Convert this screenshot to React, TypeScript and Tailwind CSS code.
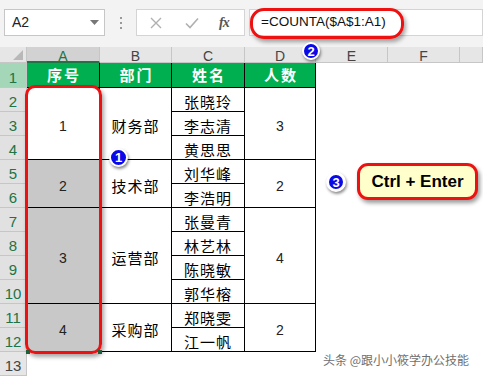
import React from "react";

const cjk = { fontFamily: '"Noto Sans CJK SC", "Noto Sans", sans-serif' };
const lat = { fontFamily: '"Liberation Sans", Arial, sans-serif' };

type Block = { rows: number; text: string; gray?: boolean };

const hClass: Record<number, string> = {
  1: "h-[24px]",
  2: "h-[48px]",
  3: "h-[72px]",
  4: "h-[96px]",
};

function ColHeader({ letter, w, selected }: { letter: string; w: string; selected?: boolean }) {
  return (
    <div
      className={
        "h-[16px] flex items-center justify-center text-[14px] leading-none border-r border-[#c6c6c6] " +
        w +
        (selected
          ? " bg-[#d2d2d2] text-[#217346] border-b-2 border-b-[#217346]"
          : " bg-[#e6e6e6] text-[#444] border-b border-b-[#c6c6c6]")
      }
      style={lat}
    >
      <span className="mt-[3px]">{letter}</span>
    </div>
  );
}

function HeadCell({ text }: { text: string }) {
  return (
    <div
      className="h-[25px] bg-[#00b050] text-white font-bold text-[15px] tracking-[2px] flex items-center justify-center border-r border-b border-black"
      style={cjk}
    >
      <span className="pl-[2px]">{text}</span>
    </div>
  );
}

function DataCol({
  letter,
  w,
  head,
  blocks,
  selected,
  numeric,
}: {
  letter: string;
  w: string;
  head: string;
  blocks: Block[];
  selected?: boolean;
  numeric?: boolean;
}) {
  return (
    <div className={"flex flex-col shrink-0 " + w}>
      <ColHeader letter={letter} w="w-full" selected={selected} />
      <HeadCell text={head} />
      {blocks.map((b, i) => (
        <div
          key={i}
          className={
            "flex items-center justify-center border-r border-b border-black pt-[5px] " +
            hClass[b.rows] +
            (b.gray ? " bg-[#c8c8c8]" : " bg-white") +
            (numeric ? " text-[14px] text-[#222]" : " text-[15px] text-black tracking-[1px]")
          }
          style={numeric ? lat : cjk}
        >
          {b.text}
        </div>
      ))}
    </div>
  );
}

function EmptyCol({ letter, w }: { letter: string; w: string }) {
  return (
    <div className={"flex flex-col shrink-0 " + w}>
      <ColHeader letter={letter} w="w-full" />
      <div className="flex-1 bg-white" />
    </div>
  );
}

function Badge({ n, cls }: { n: string; cls: string }) {
  return (
    <div
      className={
        "absolute rounded-full bg-[#0a0ae8] border-2 border-white shadow-[1px_2px_3px_rgba(0,0,0,0.45)] text-white font-bold text-[13px] leading-none flex items-center justify-center " +
        cls
      }
      style={lat}
    >
      {n}
    </div>
  );
}

export default function App() {
  const rowNums = Array.from({ length: 11 }, (_, i) => i + 2);
  const names = [
    "张晓玲",
    "李志清",
    "黄思思",
    "刘华峰",
    "李浩明",
    "张曼青",
    "林艺林",
    "陈晓敏",
    "郭华榕",
    "郑晓雯",
    "江一帆",
  ];
  return (
    <div className="relative w-[483px] h-[376px] overflow-hidden bg-white">
      {/* formula bar */}
      <div className="h-[47px] bg-[#f3f3f3] flex items-start pt-[9px] pl-[4px]">
        <div className="w-[101px] h-[27px] bg-white border border-[#c6c6c6] flex items-center justify-between pl-[7px] pr-[5px]">
          <span className="text-[14px] text-[#222]" style={lat}>
            A2
          </span>
          <svg width="9" height="6" viewBox="0 0 9 6">
            <path d="M0 0 L9 0 L4.5 5 Z" fill="#777" />
          </svg>
        </div>
        <div className="w-[31px] h-[27px] flex flex-col items-center justify-center gap-[3px]">
          <div className="w-[2px] h-[2px] bg-[#999]" />
          <div className="w-[2px] h-[2px] bg-[#999]" />
          <div className="w-[2px] h-[2px] bg-[#999]" />
        </div>
        <div className="w-[109px] h-[27px] bg-white border border-[#d4d4d4] flex items-center">
          <svg width="12" height="12" viewBox="0 0 12 12" className="ml-[13px]">
            <path d="M1 1 L11 11 M11 1 L1 11" stroke="#b0b0b0" strokeWidth="1.4" />
          </svg>
          <svg width="14" height="12" viewBox="0 0 14 12" className="ml-[23px]">
            <path d="M1 6.5 L5 10.5 L13 1.5" stroke="#b0b0b0" strokeWidth="1.6" fill="none" />
          </svg>
          <span
            className="ml-[20px] text-[14px] italic font-bold text-[#555] tracking-[-1px]"
            style={{ fontFamily: '"Liberation Serif", serif' }}
          >
            fx
          </span>
        </div>
        <div className="ml-[4px] flex-1 h-[27px] bg-white border border-[#d4d4d4] flex items-center pl-[11px]">
          <span className="text-[13.5px] text-[#111]" style={lat}>
            =COUNTA($A$1:A1)
          </span>
        </div>
      </div>

      {/* sheet */}
      <div className="flex h-[329px]">
        {/* row headers */}
        <div className="w-[27px] shrink-0 flex flex-col">
          <div className="h-[16px] bg-[#e6e6e6] border-r border-b border-[#c6c6c6] relative">
            <svg width="10" height="10" viewBox="0 0 10 10" className="absolute right-[3px] bottom-[2px]">
              <path d="M10 0 L10 10 L0 10 Z" fill="#b8b8b8" />
            </svg>
          </div>
          <div
            className="h-[25px] bg-[#a3d7b8] border-r border-b border-[#c6c6c6] text-[#217346] text-[15px] leading-none flex items-end justify-center pb-[2px]"
            style={lat}
          >
            1
          </div>
          {rowNums.map((n) => (
            <div
              key={n}
              className="h-[24px] bg-[#e1e1e1] border-r border-b border-[#c6c6c6] text-[#217346] text-[15px] leading-none flex items-end justify-center pb-[2px]"
              style={lat}
            >
              {n}
            </div>
          ))}
          <div
            className="h-[24px] bg-[#e6e6e6] border-r border-b border-[#c6c6c6] text-[#444] text-[15px] leading-none flex items-end justify-center pb-[2px]"
            style={lat}
          >
            13
          </div>
        </div>

        <DataCol
          letter="A"
          w="w-[73px]"
          head="序号"
          selected
          numeric
          blocks={[
            { rows: 3, text: "1" },
            { rows: 2, text: "2", gray: true },
            { rows: 4, text: "3", gray: true },
            { rows: 2, text: "4", gray: true },
          ]}
        />
        <DataCol
          letter="B"
          w="w-[72px]"
          head="部门"
          blocks={[
            { rows: 3, text: "财务部" },
            { rows: 2, text: "技术部" },
            { rows: 4, text: "运营部" },
            { rows: 2, text: "采购部" },
          ]}
        />
        <DataCol letter="C" w="w-[73px]" head="姓名" blocks={names.map((t) => ({ rows: 1, text: t }))} />
        <DataCol
          letter="D"
          w="w-[71px]"
          head="人数"
          numeric
          blocks={[
            { rows: 3, text: "3" },
            { rows: 2, text: "2" },
            { rows: 4, text: "4" },
            { rows: 2, text: "2" },
          ]}
        />
        <EmptyCol letter="E" w="w-[72px]" />
        <EmptyCol letter="F" w="w-[72px]" />
        <EmptyCol letter="" w="flex-1" />
      </div>

      {/* overlays */}
      <div className="absolute left-[250px] top-[8px] w-[154px] h-[31px] rounded-[14px] border-[3px] border-[#ee1111] shadow-[2px_3px_4px_rgba(0,0,0,0.35)]" />
      <div className="absolute left-[25px] top-[85px] w-[77px] h-[269px] rounded-[10px] border-[3px] border-[#ee1111] shadow-[2px_3px_4px_rgba(0,0,0,0.35)]" />
      <div className="absolute left-[26px] top-[350px] w-[4px] h-[4px] bg-[#1e5e3a]" />
      <div className="absolute left-[98px] top-[350px] w-[4px] h-[4px] bg-[#1e5e3a]" />

      <Badge n="1" cls="left-[109px] top-[148px] w-[19px] h-[19px]" />
      <Badge n="2" cls="left-[302px] top-[42px] w-[18px] h-[18px]" />
      <Badge n="3" cls="left-[326px] top-[172px] w-[20px] h-[20px] border-[3px]" />

      <div
        className="absolute left-[357px] top-[163px] w-[121px] h-[37px] rounded-[11px] border-[3px] border-[#ee1111] bg-[#ffffcc] shadow-[2px_3px_4px_rgba(0,0,0,0.4)] flex items-center justify-center text-[17px] font-bold text-black"
        style={lat}
      >
        Ctrl + Enter
      </div>

      <div
        className="absolute left-[323px] top-[351px] text-[12px] text-[#6f6f6f] whitespace-nowrap [text-shadow:0_0_2px_#fff]"
        style={cjk}
      >
        头条 @跟小小筱学办公技能
      </div>
    </div>
  );
}
